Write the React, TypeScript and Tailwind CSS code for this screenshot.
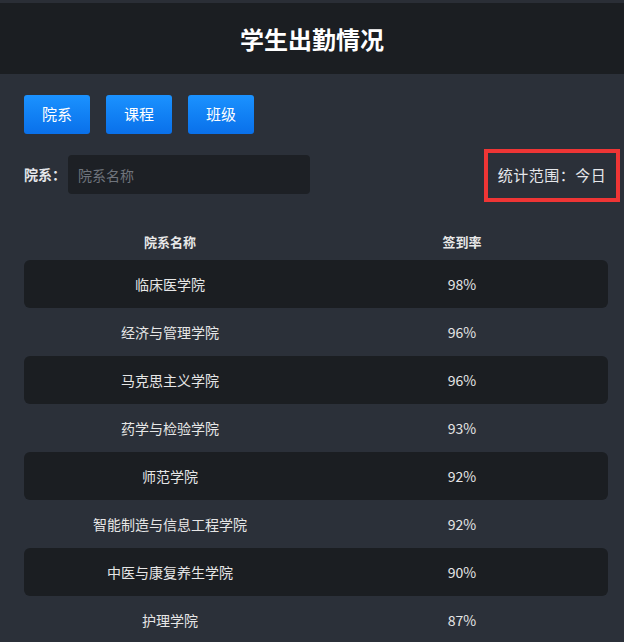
import React from "react";

interface Row {
  name: string;
  rate: string;
}

const rows: Row[] = [
  { name: "临床医学院", rate: "98%" },
  { name: "经济与管理学院", rate: "96%" },
  { name: "马克思主义学院", rate: "96%" },
  { name: "药学与检验学院", rate: "93%" },
  { name: "师范学院", rate: "92%" },
  { name: "智能制造与信息工程学院", rate: "92%" },
  { name: "中医与康复养生学院", rate: "90%" },
  { name: "护理学院", rate: "87%" },
];

const tabs = ["院系", "课程", "班级"];

export default function App() {
  return (
    <div
      className="w-[624px] h-[642px] overflow-hidden bg-[#2b3039] text-white"
      style={{ fontFamily: '"Noto Sans CJK SC", "Noto Sans", sans-serif' }}
    >
      <div className="h-[3px] bg-[#2a2e36]" />
      {/* Header */}
      <div className="h-[71px] bg-[#1b1e22] flex items-center justify-center">
        <h1 className="text-[24px] font-bold leading-none">学生出勤情况</h1>
      </div>

      <div className="pl-6 pr-4">
        {/* Tabs */}
        <div className="flex gap-4 mt-[21px]">
          {tabs.map((t) => (
            <button
              key={t}
              className="w-[66px] h-[39px] rounded-[3px] bg-gradient-to-b from-[#1b92ff] to-[#0a70ea] text-[15px] text-white"
            >
              {t}
            </button>
          ))}
        </div>

        {/* Filter */}
        <div className="flex items-center justify-between mt-[15px]">
          <div className="flex items-center mt-[-2px]">
            <span className="text-[14px] font-bold text-[#e5e7eb]">院系：</span>
            <input
              className="ml-[2px] w-[242px] h-[39px] rounded-[4px] bg-[#1d2025] px-[10px] text-[14px] text-[#d0d0d0] placeholder-[#6f747c] outline-none"
              placeholder="院系名称"
            />
          </div>
          <div className="mr-[-12px] w-[136px] h-[53px] border-[4px] border-[#ef3535] flex items-center justify-center">
            <span className="text-[15px] text-[#e5e7eb] tracking-[0.5px]">统计范围：今日</span>
          </div>
        </div>

        {/* Table */}
        <div className="mt-[22px] grid grid-cols-2 h-[36px] items-center text-[13px] font-bold text-[#e8e8e8]">
          <div className="text-center">院系名称</div>
          <div className="text-center">签到率</div>
        </div>
        <div className="flex flex-col">
          {rows.map((r, i) => (
            <div
              key={r.name}
              className={
                "grid grid-cols-2 h-[48px] items-center rounded-[6px] text-[14px] text-[#e6e6e6] " +
                (i % 2 === 0 ? "bg-[#1b1e22]" : "")
              }
            >
              <div className="text-center">{r.name}</div>
              <div className="text-center">{r.rate}</div>
            </div>
          ))}
        </div>
      </div>
    </div>
  );
}
